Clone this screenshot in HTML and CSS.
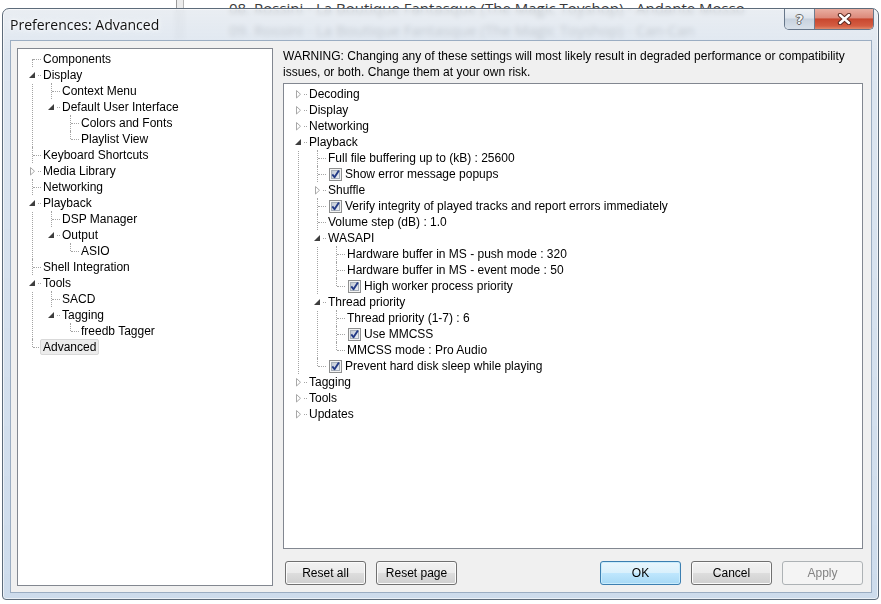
FILE: index.html
```html
<!DOCTYPE html>
<html>
<head>
<meta charset="utf-8">
<title>Preferences: Advanced</title>
<link rel="stylesheet" href="styles.css">
</head>
<body>
<svg class="defs" width="0" height="0">
<defs>
<linearGradient id="cbfill" x1="0" y1="0" x2="1" y2="1">
<stop offset="0" stop-color="#bfc7d3"/>
<stop offset="1" stop-color="#f1f3f6"/>
</linearGradient>
</defs>
<symbol id="tw-open" viewBox="0 0 9 16"><path d="M7 5 L7 11 L1 11 Z" fill="#3e3e3e"/></symbol>
<symbol id="tw-closed" viewBox="0 0 9 16"><path d="M2.5 4.5 L6.5 8.25 L2.5 12 Z" fill="#fff" stroke="#a8a8a8"/></symbol>
<symbol id="cb-on" viewBox="0 0 13 13">
<rect x="0.5" y="0.5" width="12" height="12" fill="#f4f4f4" stroke="#8e8f8f"/>
<rect x="2.5" y="2.5" width="8" height="8" fill="url(#cbfill)" stroke="#a6aeb9"/>
<path d="M3.3 6.4 L5.5 9.3 L9.9 2.6" fill="none" stroke="#233a86" stroke-width="1.9" stroke-linejoin="round"/>
</symbol>
</svg>

<div class="desktop">
<div class="splitter"></div>
<div class="playlist">
<div class="track">08. Rossini - La Boutique Fantasque (The Magic Toyshop) - Andante Mosso</div>
<div class="track">09. Rossini - La Boutique Fantasque (The Magic Toyshop) - Can-Can</div>
</div>

<div class="dialog">
<div class="titlebar">
<div class="caption">Preferences: Advanced</div>
<div class="caption-buttons">
<div class="cap-btn help">?</div>
<div class="cap-btn close">
<svg width="15" height="12" viewBox="0 0 15 12"><path d="M3 2 L12 10 M12 2 L3 10" stroke="#5a2a22" stroke-width="4.4" stroke-linecap="round"/><path d="M3 2 L12 10 M12 2 L3 10" stroke="#fff" stroke-width="2.4" stroke-linecap="round"/></svg>
</div>
</div>
</div>

<div class="client">
<div class="pages panel">
<ul class="tree">
<li><div class="node"><span class="tw"></span><span class="label">Components</span></div></li>
<li><div class="node"><span class="tw open"><svg width="9" height="16"><use href="#tw-open"/></svg></span><span class="label">Display</span></div>
<ul>
<li><div class="node"><span class="tw"></span><span class="label">Context Menu</span></div></li>
<li><div class="node"><span class="tw open"><svg width="9" height="16"><use href="#tw-open"/></svg></span><span class="label">Default User Interface</span></div>
<ul>
<li><div class="node"><span class="tw"></span><span class="label">Colors and Fonts</span></div></li>
<li><div class="node"><span class="tw"></span><span class="label">Playlist View</span></div></li>
</ul>
</li>
</ul>
</li>
<li><div class="node"><span class="tw"></span><span class="label">Keyboard Shortcuts</span></div></li>
<li><div class="node"><span class="tw closed"><svg width="9" height="16"><use href="#tw-closed"/></svg></span><span class="label">Media Library</span></div></li>
<li><div class="node"><span class="tw"></span><span class="label">Networking</span></div></li>
<li><div class="node"><span class="tw open"><svg width="9" height="16"><use href="#tw-open"/></svg></span><span class="label">Playback</span></div>
<ul>
<li><div class="node"><span class="tw"></span><span class="label">DSP Manager</span></div></li>
<li><div class="node"><span class="tw open"><svg width="9" height="16"><use href="#tw-open"/></svg></span><span class="label">Output</span></div>
<ul>
<li><div class="node"><span class="tw"></span><span class="label">ASIO</span></div></li>
</ul>
</li>
</ul>
</li>
<li><div class="node"><span class="tw"></span><span class="label">Shell Integration</span></div></li>
<li><div class="node"><span class="tw open"><svg width="9" height="16"><use href="#tw-open"/></svg></span><span class="label">Tools</span></div>
<ul>
<li><div class="node"><span class="tw"></span><span class="label">SACD</span></div></li>
<li><div class="node"><span class="tw open"><svg width="9" height="16"><use href="#tw-open"/></svg></span><span class="label">Tagging</span></div>
<ul>
<li><div class="node"><span class="tw"></span><span class="label">freedb Tagger</span></div></li>
</ul>
</li>
</ul>
</li>
<li><div class="node"><span class="tw"></span><span class="label sel">Advanced</span></div></li>
</ul>
</div>

<div class="page">
<div class="warning">WARNING: Changing any of these settings will most likely result in degraded performance or compatibility<br>issues, or both. Change them at your own risk.</div>

<div class="settings panel">
<ul class="tree">
<li><div class="node"><span class="tw closed"><svg width="9" height="16"><use href="#tw-closed"/></svg></span><span class="label">Decoding</span></div></li>
<li><div class="node"><span class="tw closed"><svg width="9" height="16"><use href="#tw-closed"/></svg></span><span class="label">Display</span></div></li>
<li><div class="node"><span class="tw closed"><svg width="9" height="16"><use href="#tw-closed"/></svg></span><span class="label">Networking</span></div></li>
<li><div class="node"><span class="tw open"><svg width="9" height="16"><use href="#tw-open"/></svg></span><span class="label">Playback</span></div>
<ul>
<li><div class="node"><span class="tw"></span><span class="label">Full file buffering up to (kB) : 25600</span></div></li>
<li><div class="node"><span class="tw"></span><svg class="cb" width="13" height="13"><use href="#cb-on"/></svg><span class="label boxed">Show error message popups</span></div></li>
<li><div class="node"><span class="tw closed"><svg width="9" height="16"><use href="#tw-closed"/></svg></span><span class="label">Shuffle</span></div></li>
<li><div class="node"><span class="tw"></span><svg class="cb" width="13" height="13"><use href="#cb-on"/></svg><span class="label boxed">Verify integrity of played tracks and report errors immediately</span></div></li>
<li><div class="node"><span class="tw"></span><span class="label">Volume step (dB) : 1.0</span></div></li>
<li><div class="node"><span class="tw open"><svg width="9" height="16"><use href="#tw-open"/></svg></span><span class="label">WASAPI</span></div>
<ul>
<li><div class="node"><span class="tw"></span><span class="label">Hardware buffer in MS - push mode : 320</span></div></li>
<li><div class="node"><span class="tw"></span><span class="label">Hardware buffer in MS - event mode : 50</span></div></li>
<li><div class="node"><span class="tw"></span><svg class="cb" width="13" height="13"><use href="#cb-on"/></svg><span class="label boxed">High worker process priority</span></div></li>
</ul>
</li>
<li><div class="node"><span class="tw open"><svg width="9" height="16"><use href="#tw-open"/></svg></span><span class="label">Thread priority</span></div>
<ul>
<li><div class="node"><span class="tw"></span><span class="label">Thread priority (1-7) : 6</span></div></li>
<li><div class="node"><span class="tw"></span><svg class="cb" width="13" height="13"><use href="#cb-on"/></svg><span class="label boxed">Use MMCSS</span></div></li>
<li><div class="node"><span class="tw"></span><span class="label">MMCSS mode : Pro Audio</span></div></li>
</ul>
</li>
<li><div class="node"><span class="tw"></span><svg class="cb" width="13" height="13"><use href="#cb-on"/></svg><span class="label boxed">Prevent hard disk sleep while playing</span></div></li>
</ul>
</li>
<li><div class="node"><span class="tw closed"><svg width="9" height="16"><use href="#tw-closed"/></svg></span><span class="label">Tagging</span></div></li>
<li><div class="node"><span class="tw closed"><svg width="9" height="16"><use href="#tw-closed"/></svg></span><span class="label">Tools</span></div></li>
<li><div class="node"><span class="tw closed"><svg width="9" height="16"><use href="#tw-closed"/></svg></span><span class="label">Updates</span></div></li>
</ul>
</div>

<div class="buttons">
<button class="btn">Reset all</button>
<button class="btn">Reset page</button>
<div class="spacer"></div>
<button class="btn default">OK</button>
<button class="btn">Cancel</button>
<button class="btn disabled">Apply</button>
</div>
</div>
</div>
</div>
</div>
</body>
</html>
```

FILE: styles.css
```css
* {
box-sizing: border-box;
}

body {
margin: 0;
width: 881px;
height: 604px;
overflow: hidden;
background: #fff;
font-family: "Liberation Sans", Arial, sans-serif;
font-size: 12px;
color: #000;
}

.defs {
width: 0;
height: 0;
overflow: hidden;
display: block;
}

/* whatever sits behind the dialog */
.desktop {
position: relative;
width: 881px;
height: 604px;
}

.splitter {
position: absolute;
left: 176px;
top: 0;
width: 8px;
height: 40px;
border-left: 1px solid #9a9a9a;
border-right: 1px solid #b5b5b5;
background: #ececec;
}

.playlist {
position: absolute;
left: 229px;
top: -3px;
font-family: "Open Sans", sans-serif;
font-size: 15px;
line-height: 22px;
color: #3a3a3a;
white-space: nowrap;
}

/* dialog window */
.dialog {
position: absolute;
left: 2px;
top: 8px;
width: 877px;
height: 592px;
display: flex;
flex-direction: column;
border: 1px solid #5d6b7a;
border-radius: 7px 7px 4px 4px;
background: linear-gradient(180deg, rgba(228,233,239,0.8) 0%, rgba(216,226,238,0.86) 8%, rgba(200,216,234,0.9) 100%);
backdrop-filter: blur(2.5px);
box-shadow: inset 0 0 0 1px rgba(255,255,255,0.6);
}

.titlebar {
display: flex;
height: 31px;
flex: none;
}

.caption {
margin: 7px 0 0 7px;
font-family: "Open Sans", sans-serif;
font-size: 14px;
line-height: 17px;
color: #111;
text-shadow: 0 0 6px #fff, 0 0 3px #fff;
}

.caption-buttons {
display: flex;
margin-left: auto;
margin-right: 4px;
height: 21px;
border: 1px solid #67778a;
border-top: none;
border-radius: 0 0 5px 5px;
overflow: hidden;
}

.cap-btn {
display: flex;
align-items: center;
justify-content: center;
height: 100%;
}

.help {
width: 30px;
border-right: 1px solid #6d7d90;
background: linear-gradient(180deg, #eef2f6 0%, #dde4ec 45%, #c7d2de 50%, #d8e1ea 100%);
font-family: "DejaVu Sans", sans-serif;
font-size: 13px;
font-weight: bold;
color: #f4f6f8;
text-shadow: 1px 0 0 #666, -1px 0 0 #666, 0 1px 0 #666, 0 -1px 0 #666;
}

.close {
width: 58px;
background: linear-gradient(180deg, #e9aea1 0%, #dc8a7b 44%, #c8472f 50%, #d45d42 85%, #e08a6c 100%);
}

.client {
flex: 1;
display: flex;
gap: 10px;
margin: 0 6px 6px 7px;
padding: 7px 8px 6px 6px;
border: 1px solid #9badc2;
background: #f0f0f0;
}

.panel {
background: #fff;
border: 1px solid #828790;
padding-top: 2px;
overflow: hidden;
}

.pages {
width: 256px;
flex: none;
}

.page {
flex: 1;
display: flex;
flex-direction: column;
}

.warning {
line-height: 16px;
white-space: nowrap;
}

.settings {
flex: 1;
margin-top: 3px;
}

/* tree view */
.tree,
.tree ul {
list-style: none;
margin: 0;
padding: 0;
}

.tree ul {
padding-left: 19px;
}

.tree li {
position: relative;
}

.tree li::before {
content: "";
position: absolute;
left: 14px;
top: 0;
bottom: 0;
border-left: 1px dotted #a4a4a4;
}

.tree li:last-child::before {
bottom: auto;
height: 8px;
}

.tree > li:first-child::before {
top: 8px;
}

.tree li::after {
content: "";
position: absolute;
left: 15px;
top: 8px;
width: 8px;
border-top: 1px dotted #a4a4a4;
}

.node {
position: relative;
z-index: 1;
display: flex;
align-items: center;
height: 16px;
line-height: 16px;
white-space: nowrap;
}

.tw {
flex: none;
width: 9px;
height: 16px;
margin-left: 10px;
}

.tw svg {
display: block;
}

.tw.open,
.tw.closed {
background: #fff;
}

.label {
margin-left: 6px;
}

.label.boxed {
margin-left: 0;
}

.label.sel {
margin-left: 3px;
padding: 0 2px;
line-height: 14px;
border: 1px solid #d9d9d9;
border-radius: 2px;
background: #ececec;
}

.cb {
flex: none;
display: block;
margin: 0 3px 0 7px;
}

/* bottom buttons */
.buttons {
display: flex;
gap: 10px;
height: 24px;
margin: 12px 0 1px;
padding-left: 2px;
}

.spacer {
flex: 1;
}

.btn {
width: 81px;
height: 24px;
padding: 0;
font-family: "Liberation Sans", Arial, sans-serif;
font-size: 12px;
color: #000;
border: 1px solid #707070;
border-radius: 3px;
background: linear-gradient(180deg, #f2f2f2 0%, #ebebeb 48%, #dddddd 52%, #cfcfcf 100%);
box-shadow: inset 0 0 0 1px #fbfbfb;
}

.btn.default {
border-color: #3c7fb1;
background: linear-gradient(180deg, #eaf6fd 0%, #d9f0fc 48%, #bee6fd 52%, #a7d9f5 100%);
box-shadow: inset 0 0 0 1px #c9ecfc;
}

.btn.disabled {
color: #838383;
border-color: #adb2b5;
background: #f4f4f4;
box-shadow: none;
}
```
